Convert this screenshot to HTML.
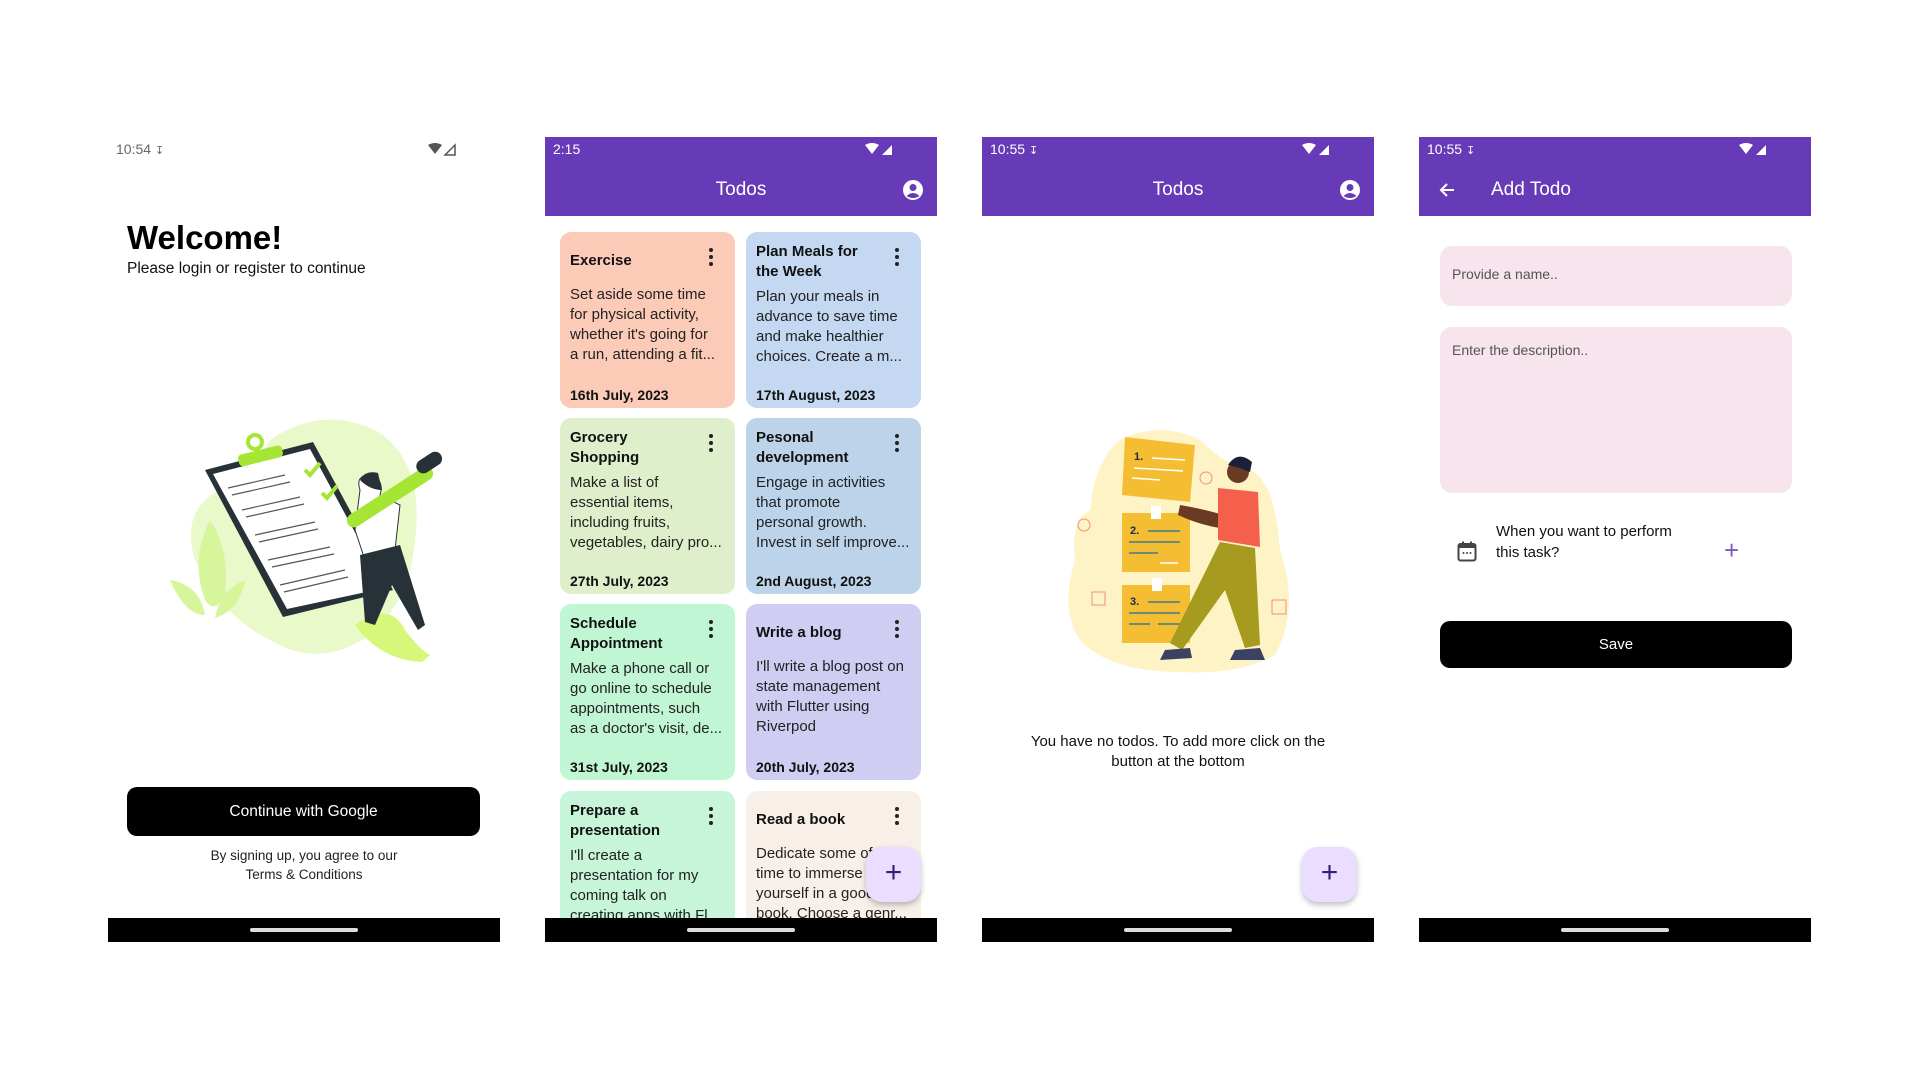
<!DOCTYPE html>
<html><head><meta charset="utf-8"><style>
*{margin:0;padding:0;box-sizing:border-box}
body{width:1920px;height:1080px;background:#fff;position:relative;overflow:hidden;font-family:"Liberation Sans",sans-serif;color:#1c1b1f}
.ph{position:absolute;top:137px;width:392px;height:805px;background:#fff;overflow:hidden}
.sb{position:absolute;left:0;top:0;width:100%;height:24px;font-size:14px;line-height:24px;padding-left:8px}
.bar{position:absolute;left:0;top:0;width:100%;height:79px;background:#673ab7;color:#fff}
.bar .t{position:absolute;top:42px;width:100%;text-align:center;font-size:19px;line-height:22px}
.nav{position:absolute;left:0;top:781px;width:100%;height:24px;background:#000}
.nav:after{content:"";position:absolute;left:142px;top:10px;width:108px;height:4px;border-radius:2px;background:#ddd}
.card{position:absolute;width:175px;height:176px;border-radius:11px;padding:0 10px}
.card .ti{position:absolute;left:10px;font-size:15px;font-weight:bold;line-height:20px;width:135px;color:#111}
.card .bd{position:absolute;left:10px;font-size:15px;line-height:20px;width:160px;color:#222;white-space:nowrap}
.card .dt{position:absolute;left:10px;top:153px;font-size:14px;font-weight:bold;line-height:20px;color:#111}
.dots{position:absolute;left:149px;top:16px;width:4px;height:18px}
.dots i{display:block;width:4px;height:4px;border-radius:2px;background:#222;margin-bottom:3px}
.fab{position:absolute;width:55px;height:55px;border-radius:16px;background:#eaddff;box-shadow:0 3px 6px rgba(0,0,0,.25);color:#3b1f73;font-size:30px;text-align:center;line-height:52px}
.wifi{position:absolute;top:6px}
</style></head><body>

<!-- Phone 1 -->
<div class="ph" style="left:108px">
 <div class="sb" style="color:#666">10:54 <span style="font-size:11px">&#8615;</span></div>
 <svg class="wifi" style="left:320px" width="30" height="14" viewBox="0 0 30 14"><path d="M0 2 Q7 -2 14 2 L7 11 Z" fill="#555"/><path d="M17 12 L27 2 L27 12 Z" fill="none" stroke="#555" stroke-width="1.5"/></svg>
 <div style="position:absolute;left:19px;top:82px;font-size:33px;font-weight:bold;color:#000">Welcome!</div>
 <div style="position:absolute;left:19px;top:123px;font-size:15.5px;color:#111">Please login or register to continue</div>
 <svg style="position:absolute;left:52px;top:263px" width="290" height="270" viewBox="0 0 290 270">
  <path d="M110 40 Q160 5 215 30 Q265 60 255 140 Q250 200 210 235 Q160 270 110 240 Q60 215 35 160 Q20 110 60 90 Q85 80 110 40Z" fill="#e9f9c9"/>
  <path d="M195 225 Q230 200 245 230 Q260 250 270 255 L262 262 Q220 260 195 225Z" fill="#d6f77a"/>
  <path d="M50 120 Q70 150 65 195 Q55 215 45 200 Q30 160 50 120Z" fill="#d7f59a"/>
  <path d="M10 180 Q40 185 45 215 Q25 215 10 180Z" fill="#d7f59a"/>
  <path d="M85 180 Q80 210 55 218 Q60 190 85 180Z" fill="#d7f59a"/>
  <polygon points="45,70 153,42 233,190 123,217" fill="#263238"/>
  <polygon points="53,74 150,49 225,188 127,209" fill="#fff"/>
  <g stroke="#555" stroke-width="1.2">
   <line x1="68" y1="88" x2="125" y2="75"/><line x1="72" y1="95" x2="130" y2="82"/>
   <line x1="82" y1="110" x2="140" y2="97"/><line x1="86" y1="117" x2="144" y2="104"/>
   <line x1="95" y1="135" x2="155" y2="122"/><line x1="99" y1="142" x2="158" y2="129"/>
   <line x1="108" y1="160" x2="170" y2="147"/><line x1="112" y1="167" x2="174" y2="154"/>
   <line x1="120" y1="185" x2="185" y2="170"/><line x1="124" y1="192" x2="188" y2="177"/>
  </g>
  <rect x="78" y="50" width="45" height="12" rx="4" fill="#a5e635" transform="rotate(-14 100 56)"/>
  <circle cx="95" cy="42" r="7" fill="none" stroke="#a5e635" stroke-width="4"/>
  <path d="M145 70 l5 5 l10 -12 M162 93 l5 5 l10 -12" stroke="#a5e635" stroke-width="4" fill="none"/>
  <path d="M200 90 Q195 75 210 75 Q225 80 220 95 L240 105 L235 150 L205 160 L195 130 Z" fill="#fff" stroke="#263238" stroke-width="1"/>
  <path d="M200 80 Q205 70 218 73 L222 90 Q210 90 200 80Z" fill="#263238"/>
  <path d="M200 155 L240 145 L265 225 L258 230 L232 185 L215 225 L205 222 Z" fill="#263238"/>
  <rect x="180" y="90" width="100" height="14" rx="7" fill="#a5e635" transform="rotate(-33 230 97)"/>
  <rect x="255" y="55" width="28" height="14" rx="7" fill="#263238" transform="rotate(-33 270 62)"/>
 </svg>
 <div style="position:absolute;left:19px;top:650px;width:353px;height:49px;background:#000;border-radius:10px;color:#fff;text-align:center;line-height:49px;font-size:15.5px">Continue with Google</div>
 <div style="position:absolute;left:0;top:709px;width:100%;text-align:center;font-size:13.5px;line-height:19px;color:#222">By signing up, you agree to our<br>Terms &amp; Conditions</div>
 <div class="nav"></div>
</div>

<!-- Phone 2 -->
<div class="ph" style="left:545px">
 <div class="bar"><div class="sb" style="color:#fff">2:15</div>
  <svg class="wifi" style="left:320px" width="30" height="14" viewBox="0 0 30 14"><path d="M0 2 Q7 -2 14 2 L7 11 Z" fill="#fff"/><path d="M17 12 L27 2 L27 12 Z" fill="#fff"/></svg>
  <div class="t">Todos</div>
  <svg style="position:absolute;left:357px;top:42px" width="22" height="22" viewBox="0 0 22 22"><circle cx="11" cy="11" r="10" fill="#fff"/><circle cx="11" cy="8.5" r="3.5" fill="#673ab7"/><path d="M4.5 17 Q11 11 17.5 17 Q11 21 4.5 17Z" fill="#673ab7"/></svg>
 </div>
 <div class="card" style="left:15px;top:95px;background:#fccbb8"><div class="ti" style="top:19px">Exercise</div><div class="dots"><i></i><i></i><i></i></div><div class="bd" style="top:53px">Set aside some time<br>for physical activity,<br>whether it's going for<br>a run, attending a fit...</div><div class="dt">16th July, 2023</div></div>
 <div class="card" style="left:201px;top:95px;background:#c4d8f1"><div class="ti" style="top:10px">Plan Meals for<br>the Week</div><div class="dots"><i></i><i></i><i></i></div><div class="bd" style="top:55px">Plan your meals in<br>advance to save time<br>and make healthier<br>choices. Create a m...</div><div class="dt">17th August, 2023</div></div>
 <div class="card" style="left:15px;top:281px;background:#dfeecb"><div class="ti" style="top:10px">Grocery<br>Shopping</div><div class="dots"><i></i><i></i><i></i></div><div class="bd" style="top:55px">Make a list of<br>essential items,<br>including fruits,<br>vegetables, dairy pro...</div><div class="dt">27th July, 2023</div></div>
 <div class="card" style="left:201px;top:281px;background:#bcd3e9"><div class="ti" style="top:10px">Pesonal<br>development</div><div class="dots"><i></i><i></i><i></i></div><div class="bd" style="top:55px">Engage in activities<br>that promote<br>personal growth.<br>Invest in self improve...</div><div class="dt">2nd August, 2023</div></div>
 <div class="card" style="left:15px;top:467px;background:#c1f6d4"><div class="ti" style="top:10px">Schedule<br>Appointment</div><div class="dots"><i></i><i></i><i></i></div><div class="bd" style="top:55px">Make a phone call or<br>go online to schedule<br>appointments, such<br>as a doctor's visit, de...</div><div class="dt">31st July, 2023</div></div>
 <div class="card" style="left:201px;top:467px;background:#d0cdf3"><div class="ti" style="top:19px">Write a blog</div><div class="dots"><i></i><i></i><i></i></div><div class="bd" style="top:53px">I'll write a blog post on<br>state management<br>with Flutter using<br>Riverpod</div><div class="dt">20th July, 2023</div></div>
 <div class="card" style="left:15px;top:654px;background:#c6f5da"><div class="ti" style="top:10px">Prepare a<br>presentation</div><div class="dots"><i></i><i></i><i></i></div><div class="bd" style="top:55px">I'll create a<br>presentation for my<br>coming talk on<br>creating apps with Fl...</div></div>
 <div class="card" style="left:201px;top:654px;background:#f8efe8"><div class="ti" style="top:19px">Read a book</div><div class="dots"><i></i><i></i><i></i></div><div class="bd" style="top:53px">Dedicate some of<br>time to immerse<br>yourself in a good<br>book. Choose a genr...</div></div>
 <div class="fab" style="left:321px;top:710px">+</div>
 <div class="nav"></div>
</div>

<!-- Phone 3 -->
<div class="ph" style="left:982px">
 <div class="bar"><div class="sb" style="color:#fff">10:55 <span style="font-size:11px">&#8615;</span></div>
  <svg class="wifi" style="left:320px" width="30" height="14" viewBox="0 0 30 14"><path d="M0 2 Q7 -2 14 2 L7 11 Z" fill="#fff"/><path d="M17 12 L27 2 L27 12 Z" fill="#fff"/></svg>
  <div class="t">Todos</div>
  <svg style="position:absolute;left:357px;top:42px" width="22" height="22" viewBox="0 0 22 22"><circle cx="11" cy="11" r="10" fill="#fff"/><circle cx="11" cy="8.5" r="3.5" fill="#673ab7"/><path d="M4.5 17 Q11 11 17.5 17 Q11 21 4.5 17Z" fill="#673ab7"/></svg>
 </div>
 <svg style="position:absolute;left:78px;top:273px" width="250" height="270" viewBox="0 0 250 270">
  <path d="M60 30 Q100 10 140 30 Q165 55 190 60 Q215 70 220 140 Q240 200 215 245 Q180 265 120 262 Q50 262 20 230 Q0 200 15 150 Q10 110 30 100 Q35 50 60 30Z" fill="#fdf3c4"/>
  <polygon points="65,27 135,35 130,92 62,85" fill="#f5be32"/>
  <rect x="62" y="103" width="68" height="59" fill="#f5be32"/>
  <rect x="62" y="175" width="68" height="58" fill="#f5be32"/>
  <rect x="91" y="96" width="10" height="13" fill="#fff"/><rect x="92" y="168" width="10" height="13" fill="#fff"/>
  <g stroke="#fff" stroke-width="1.5"><line x1="92" y1="48" x2="125" y2="50"/><line x1="74" y1="58" x2="123" y2="61"/><line x1="72" y1="68" x2="100" y2="70"/><line x1="100" y1="153" x2="118" y2="153"/></g>
  <g stroke="#3c7a8c" stroke-width="1.5"><line x1="88" y1="121" x2="120" y2="121"/><line x1="69" y1="132" x2="120" y2="132"/><line x1="69" y1="143" x2="98" y2="143"/><line x1="88" y1="192" x2="120" y2="192"/><line x1="69" y1="203" x2="120" y2="203"/><line x1="69" y1="214" x2="90" y2="214"/><line x1="98" y1="214" x2="120" y2="214"/></g>
  <text x="74" y="50" font-size="11" font-weight="bold" fill="#1b2a4a" font-family="Liberation Sans">1.</text>
  <text x="70" y="124" font-size="11" font-weight="bold" fill="#1b2a4a" font-family="Liberation Sans">2.</text>
  <text x="70" y="195" font-size="11" font-weight="bold" fill="#1b2a4a" font-family="Liberation Sans">3.</text>
  <circle cx="146" cy="68" r="6" fill="none" stroke="#f0907a"/><circle cx="24" cy="115" r="6" fill="none" stroke="#f0907a"/>
  <rect x="32" y="182" width="13" height="13" fill="none" stroke="#f0907a"/><rect x="212" y="190" width="14" height="14" fill="none" stroke="#f0907a"/>
  <path d="M120 95 Q150 100 180 110 L185 120 Q150 120 118 105Z" fill="#6b3a23"/>
  <path d="M158 78 L198 82 L200 137 L158 130Z" fill="#f4604c"/>
  <circle cx="178" cy="62" r="11" fill="#6b3a23"/><path d="M168 55 Q178 40 192 52 L190 62 L180 58Z" fill="#1b2238"/>
  <path d="M160 132 L195 138 L200 235 L185 238 L165 180 L122 240 L110 233 Z" fill="#a69a1f"/>
  <path d="M105 240 L130 238 L132 248 L100 250Z" fill="#3c4263"/><path d="M175 240 L200 238 L205 250 L170 250Z" fill="#3c4263"/>
 </svg>
 <div style="position:absolute;left:0;top:595px;width:100%;text-align:center;font-size:15px;line-height:20px;color:#111">You have no todos. To add more click on the<br>button at the bottom</div>
 <div class="fab" style="left:320px;top:710px">+</div>
 <div class="nav"></div>
</div>

<!-- Phone 4 -->
<div class="ph" style="left:1419px">
 <div class="bar"><div class="sb" style="color:#fff">10:55 <span style="font-size:11px">&#8615;</span></div>
  <svg class="wifi" style="left:320px" width="30" height="14" viewBox="0 0 30 14"><path d="M0 2 Q7 -2 14 2 L7 11 Z" fill="#fff"/><path d="M17 12 L27 2 L27 12 Z" fill="#fff"/></svg>
  <svg style="position:absolute;left:19px;top:44px" width="18" height="18" viewBox="0 0 18 18"><path d="M16 9 H3 M9 3 L3 9 L9 15" stroke="#fff" stroke-width="2" fill="none"/></svg>
  <div class="t" style="text-align:left;left:72px;width:auto">Add Todo</div>
 </div>
 <div style="position:absolute;left:21px;top:109px;width:352px;height:60px;border-radius:12px;background:#f7e4ec;padding:20px 12px;font-size:14px;color:#555">Provide a name..</div>
 <div style="position:absolute;left:21px;top:190px;width:352px;height:166px;border-radius:12px;background:#f7e4ec;padding:15px 12px;font-size:14px;color:#555">Enter the description..</div>
 <svg style="position:absolute;left:38px;top:404px" width="20" height="21" viewBox="0 0 20 21"><rect x="1.5" y="3" width="17" height="16.5" rx="2" fill="none" stroke="#444" stroke-width="2"/><rect x="1.5" y="3" width="17" height="4" fill="#444"/><rect x="5" y="0.5" width="2" height="4" fill="#444"/><rect x="13" y="0.5" width="2" height="4" fill="#444"/><circle cx="6.5" cy="12" r="1" fill="#444"/><circle cx="10" cy="12" r="1" fill="#444"/><circle cx="13.5" cy="12" r="1" fill="#444"/></svg>
 <div style="position:absolute;left:77px;top:384px;font-size:15px;line-height:21px;color:#111">When you want to perform<br>this task?</div>
 <div style="position:absolute;left:305px;top:398px;font-size:26px;line-height:30px;color:#7e57c2">+</div>
 <div style="position:absolute;left:21px;top:484px;width:352px;height:47px;border-radius:10px;background:#000;color:#fff;text-align:center;line-height:47px;font-size:15px">Save</div>
 <div class="nav"></div>
</div>
</body></html>
